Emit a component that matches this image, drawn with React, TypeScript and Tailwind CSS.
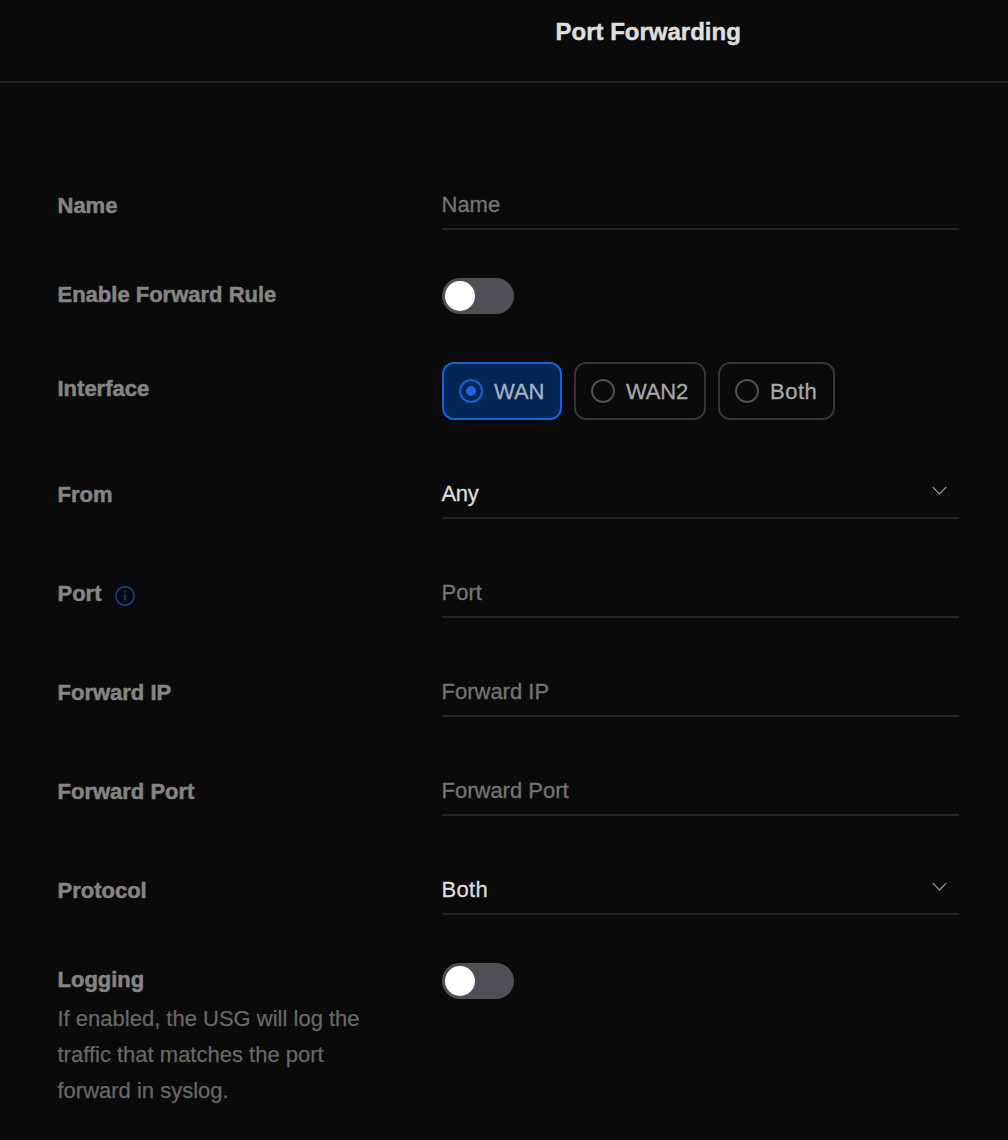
import type { ReactNode } from "react";

function Row({ label, className, children }: { label: ReactNode; className: string; children: ReactNode }) {
  return (
    <div className={`flex ${className}`}>
      <div className="-ml-[0.5px] w-[384.5px] shrink-0 pt-[3px] font-bold text-[#858585] [-webkit-text-stroke:0.5px]">{label}</div>
      <div className="w-[517px]">{children}</div>
    </div>
  );
}

function TextField({ name }: { name: string }) {
  return (
    <input
      aria-label={name}
      placeholder={name}
      className="-mt-px block h-[42px] w-full border-b-2 border-[#242424] bg-transparent pb-[7px] -indent-[0.5px] text-[#dedede] outline-none [-webkit-text-stroke:0.3px] placeholder:text-[#757575]"
    />
  );
}

function Toggle({ label }: { label: string }) {
  return (
    <button role="switch" aria-checked="false" aria-label={label} className="flex h-9 w-[72px] items-center rounded-full bg-[#4e5058] px-[3px]">
      <span className="size-[30px] rounded-full bg-white" />
    </button>
  );
}

function SelectField({ value, tracking }: { value: string; tracking: string }) {
  return (
    <div className="-mt-px flex h-[42px] justify-between border-b-2 border-[#242424] pr-3 text-[#dedede] [-webkit-text-stroke:0.3px]">
      <span className={`-ml-[0.5px] pt-[2px] leading-[29px] ${tracking}`}>{value}</span>
      <svg className="mt-[9px]" width="15" height="9" viewBox="0 0 15 9" fill="none" stroke="#a0a0a0" strokeWidth="1.2">
        <path d="M.8 1.2 7.5 7.9 14.2 1.2" />
      </svg>
    </div>
  );
}

function Choice({ label, selected, width, tracking }: { label: string; selected?: boolean; width: string; tracking: string }) {
  return (
    <button className={`flex h-[58px] shrink-0 items-center gap-[11px] rounded-xl border-2 pl-[15px] ${width} ${selected ? "border-[#1264dc] bg-[#032654]" : "border-[#35363b]"}`}>
      <span className={`flex size-6 items-center justify-center rounded-full border-2 ${selected ? "border-[#1264dc]" : "border-[#4d4f56]"}`}>
        {selected && <span className="size-[10px] rounded-full bg-[#1268e5]" />}
      </span>
      <span className={`pt-[2px] [-webkit-text-stroke:0.3px] ${tracking} ${selected ? "text-[#a8b2c2]" : "text-[#a9a9a9]"}`}>{label}</span>
    </button>
  );
}

export default function App() {
  return (
    <main className="h-[1140px] w-[1008px] overflow-hidden bg-[#0a0a0a] font-['Liberation_Sans',sans-serif] text-[22px] leading-[28px]">
      <header className="h-[83px] border-b-2 border-[#242424] pt-[17px] pl-[555.5px] text-2xl leading-[29px] font-bold text-[#dedede] [-webkit-text-stroke:0.5px]">
        Port Forwarding
      </header>
      <div className="pt-[106px] pl-[58px]">
        <Row label="Name" className="h-[89px]"><TextField name="Name" /></Row>
        <Row label="Enable Forward Rule" className="h-[94px]"><Toggle label="Enable Forward Rule" /></Row>
        <Row label="Interface" className="h-[106px]">
          <div className="-mt-[10px] flex gap-3">
            <Choice label="WAN" selected width="w-[120px]" tracking="tracking-normal" />
            <Choice label="WAN2" width="w-[132px]" tracking="tracking-[-0.2px]" />
            <Choice label="Both" width="w-[117px]" tracking="tracking-[0.5px]" />
          </div>
        </Row>
        <Row label="From" className="h-[99px]"><SelectField value="Any" tracking="tracking-[-0.3px]" /></Row>
        <Row
          label={
            <span className="flex">
              Port
              <svg className="mt-[6px] ml-[13.5px]" width="20" height="20" viewBox="0 0 20 20" fill="none" stroke="#114da6" strokeWidth="1.4">
                <circle cx="10" cy="10" r="9.2" />
                <path d="M10 8.3v6.2M10 5.2v1.6" />
              </svg>
            </span>
          }
          className="h-[99px]"
        ><TextField name="Port" /></Row>
        <Row label="Forward IP" className="h-[99px]"><TextField name="Forward IP" /></Row>
        <Row label="Forward Port" className="h-[99px]"><TextField name="Forward Port" /></Row>
        <Row label="Protocol" className="h-[89px]"><SelectField value="Both" tracking="tracking-[0.3px]" /></Row>
        <Row
          label={
            <>
              Logging
              <p className="mt-[7px] w-[320px] leading-9 font-normal text-[#686868] [-webkit-text-stroke:0.25px]">If enabled, the USG will log the<br />traffic that matches the port<br />forward in syslog.</p>
            </>
          }
          className=""
        ><Toggle label="Logging" /></Row>
      </div>
    </main>
  );
}
